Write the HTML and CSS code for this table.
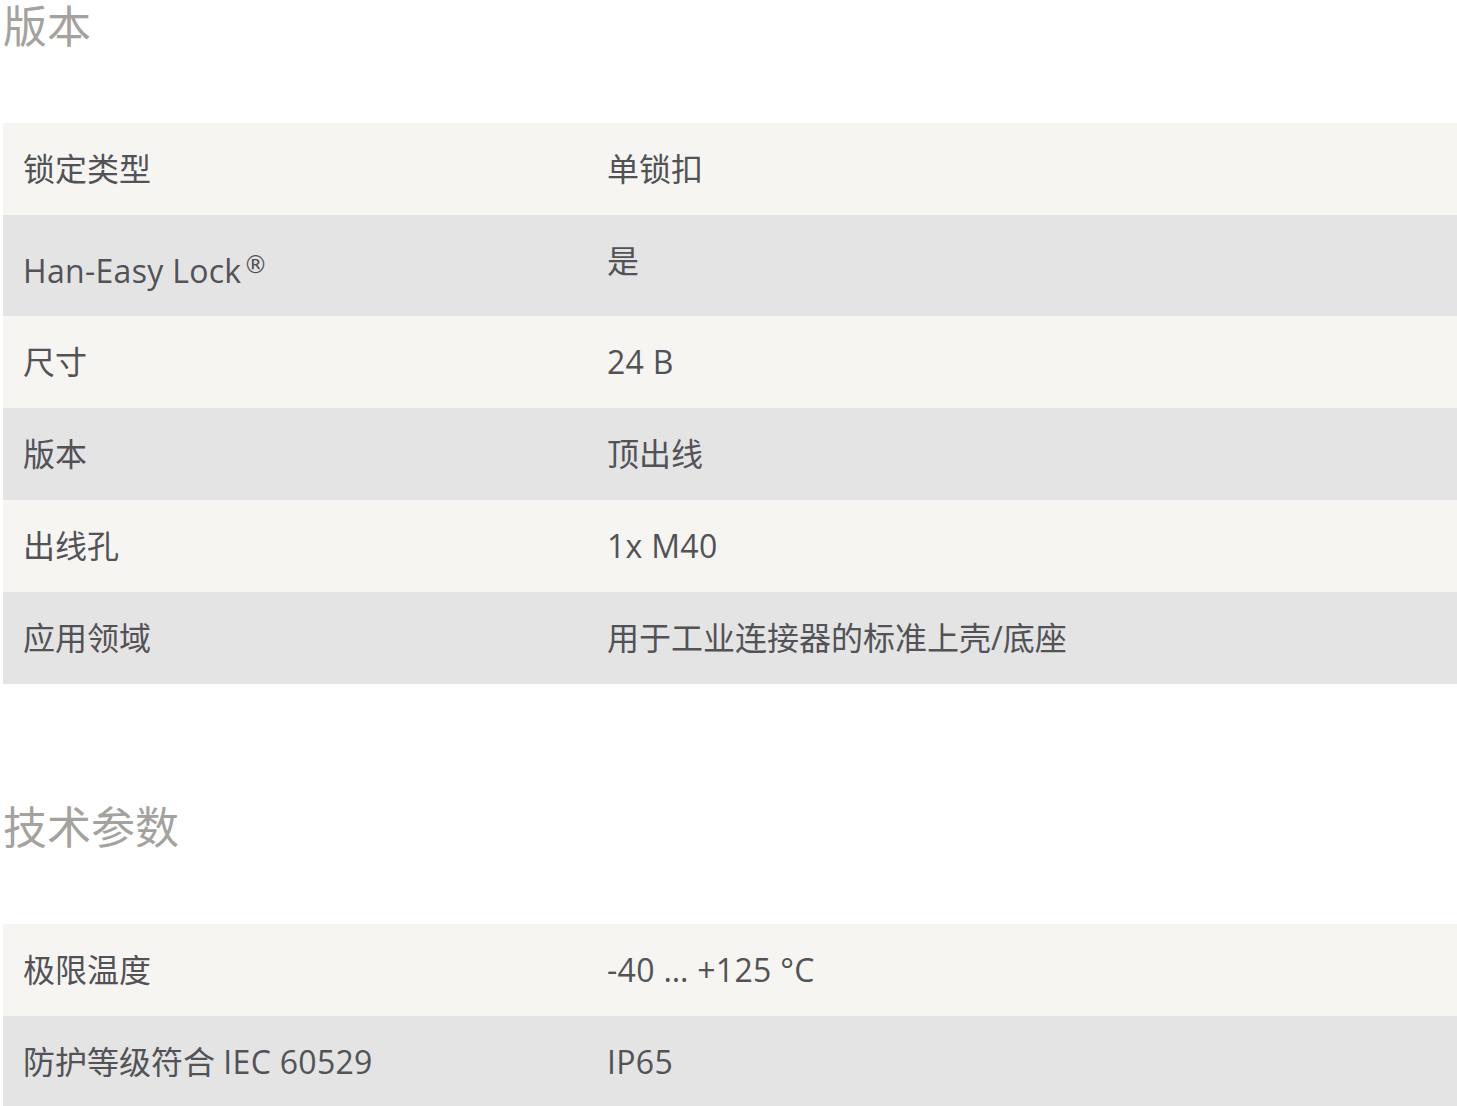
FILE: index.html
```html
<!DOCTYPE html>
<html lang="zh-CN">
<head>
<meta charset="utf-8">
<title>版本</title>
<link rel="stylesheet" href="styles.css">
</head>
<body>
<div class="page">
  <section class="group">
    <h2 class="group-title">版本</h2>
    <table class="spec">
      <tr><td class="k">锁定类型</td><td class="v">单锁扣</td></tr>
      <tr class="tall"><td class="k"><span class="lat">Han-Easy Lock</span><sup>®</sup></td><td class="v v-top">是</td></tr>
      <tr><td class="k">尺寸</td><td class="v"><span class="lat">24 B</span></td></tr>
      <tr><td class="k">版本</td><td class="v">顶出线</td></tr>
      <tr><td class="k">出线孔</td><td class="v"><span class="lat">1x M40</span></td></tr>
      <tr><td class="k">应用领域</td><td class="v">用于工业连接器的标准上壳/底座</td></tr>
    </table>
  </section>
  <section class="group group-2">
    <h2 class="group-title">技术参数</h2>
    <table class="spec">
      <tr><td class="k">极限温度</td><td class="v"><span class="lat">-40 … +125 °C</span></td></tr>
      <tr><td class="k">防护等级符合 <span class="lat">IEC 60529</span></td><td class="v"><span class="lat">IP65</span></td></tr>
    </table>
  </section>
</div>
</body>
</html>
```

FILE: styles.css
```css
html, body {
  margin: 0;
  padding: 0;
  background: #ffffff;
}
body {
  font-family: "Open Sans", "Noto Sans CJK SC", sans-serif;
  color: #525257;
}
.page {
  padding-left: 3px;
}
.group-title {
  margin: 0 0 72px 0;
  padding-top: 1px;
  height: 50px;
  line-height: 50px;
  font-size: 44px;
  font-weight: 400;
  color: #a3a29e;
}
.group-2 {
  margin-top: 117px;
}
.spec {
  width: 1454px;
  border-collapse: collapse;
  table-layout: fixed;
}
.spec tr:nth-child(odd) {
  background: #f6f5f2;
}
.spec tr:nth-child(even) {
  background: #e4e4e4;
}
.spec td {
  height: 92px;
  padding: 0 0 0 20px;
  font-size: 32px;
  line-height: 40px;
  vertical-align: middle;
  box-sizing: border-box;
}
.spec .lat {
  letter-spacing: 0.3px;
}
.spec td.k {
  width: 603px;
}
.spec td.v {
  padding-left: 1px;
}
.spec tr.tall td {
  height: 101px;
}
.spec tr.tall td.k {
  padding-top: 10px;
}
.spec td.v-top {
  padding-top: 0;
  padding-bottom: 10px;
}
.spec sup {
  font-family: "DejaVu Sans", sans-serif;
  font-size: 24px;
  line-height: 0;
  vertical-align: 10px;
  margin-left: 2px;
}
```
